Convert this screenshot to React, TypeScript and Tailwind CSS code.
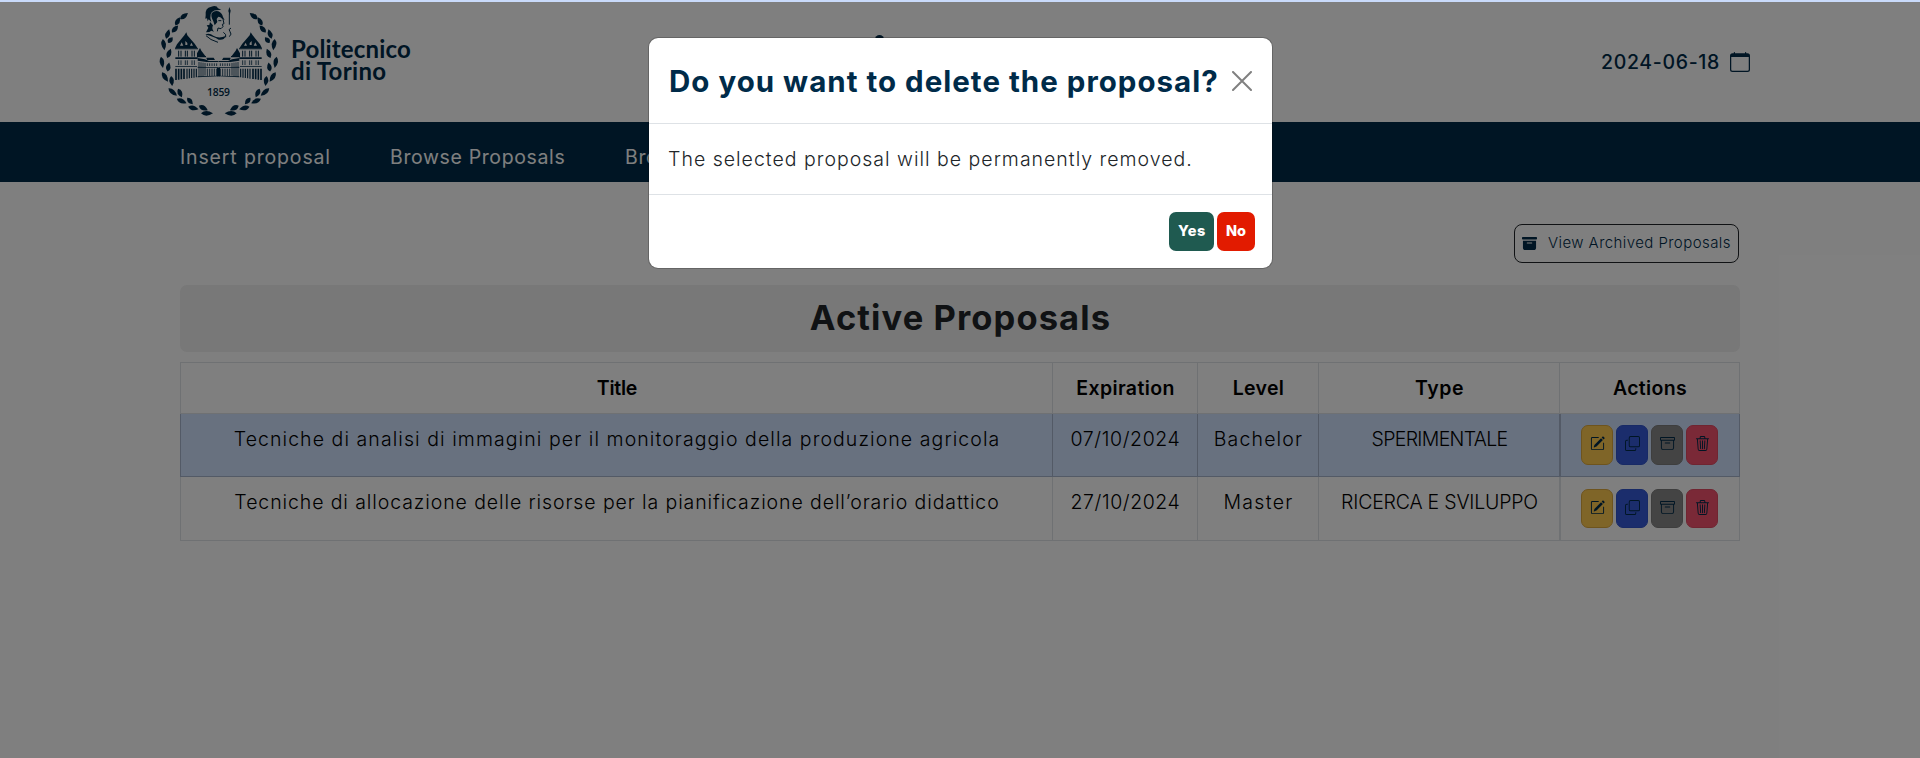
import type { ReactNode } from 'react';
import { BsArchive, BsArchiveFill, BsCalendar, BsCopy, BsPencilSquare, BsTrash3 } from 'react-icons/bs';

// Laurel leaves of the left branch: x, y, rotation, length
const leaves: [number, number, number, number][] = [
  [102, 48, -38, 15], [83, 64, -62, 14], [75, 87, -48, 14], [53, 102, -72, 15], [61, 120, -50, 11],
  [41, 134, 82, 17], [57, 160, -68, 15], [36, 187, 80, 17], [55, 201, -80, 14], [45, 231, 58, 17],
  [65, 243, 84, 15], [68, 276, 42, 17], [90, 279, 66, 14], [95, 303, 24, 16], [120, 303, 50, 13],
  [130, 324, 14, 16], [160, 324, 28, 15], [171, 340, 0, 18],
];

function Branch() {
  return (
    <g>
      {leaves.map(([x, y, r, l], i) => (
        <path
          key={i}
          transform={`translate(${x} ${y}) rotate(${r})`}
          d={`M${-l} 0 Q${-l * 0.2} -14 ${l} 0 Q${-l * 0.2} 14 ${-l} 0Z`}
        />
      ))}
    </g>
  );
}

// Left half of the castle facade
function Wing() {
  return (
    <g>
      <path d="M109 97 l3 9 22 25 9 14 H75 l6 -12 22 -27Z" />
      <path d="M90 137 l5 -10 5 10Z M106 135v-12l6 6v6Z M120 137 l4 -9 5 9Z" fill="#fff" />
      <path d="M75 145 H144 v3 H75Z M76 172 H143 v5 H76Z M76 198 H141 v2 H76Z" />
      <path d="M86 152v18M93 152v18M106 152v18M112 152v18M126 152v18M133 152v18" strokeWidth="3" stroke="currentColor" />
      <path d="M86 181v14M93 181v14M106 181v14M112 181v14M126 181v14M133 181v14" strokeWidth="2.4" stroke="currentColor" />
      <path d="M78 206v34M86 206v33M94 206v32M102 206v31" strokeWidth="5" stroke="currentColor" />
      <path d="M111 206v30M118 206v29M125 206v28M132 206v27M139 206v26" strokeWidth="3.4" stroke="currentColor" />
      <path d="M150 144 l4 8 12 16 h2 v4 H141 v-12Z" />
      <path d="M143 174 l22 4 12 5 h28 v3 H170 l-27 -4Z" />
      <path d="M169 173 h22 l4 7 h-24Z" />
      <path d="M143 200 l20 1 h42 v2 H143Z M143 229l62-2v2l-62 3Z" />
      <path d="M147 186v44M153 187v42M159 188v40M165 189v38" strokeWidth="2.4" stroke="currentColor" />
      <path
        d="M172 190v8M179 190v8M186 190v8M193 190v8M200 190v8M172 206v22M179 206v22M186 206v22M193 206v22M200 206v22"
        strokeWidth="2.4"
        stroke="currentColor"
      />
    </g>
  );
}

function Crest() {
  return (
    <svg className="h-[120px] w-[140px] shrink-0 text-[#002b49]" viewBox="0 6 420 360" fill="currentColor">
      <Branch />
      <g transform="translate(413 0) scale(-1 1)">
        <Branch />
      </g>
      <Wing />
      <g transform="translate(411 0) scale(-1 1)">
        <Wing />
      </g>
      <path d="M201 203h9v26h-9Z" />
      {/* helmeted head and spear */}
      <path d="M167 46 Q164 24 184 20 Q200 15 204 25 L214 29 L199 31 Q186 32 182 43 Q179 54 184 66 L176 58 L173 64 L171 55 L166 56Z" />
      <path d="M185 40 Q194 30 205 34 Q216 39 219 51 L224 61 L217 57 Q211 50 205 50 L200 57 L202 66 L194 76 L190 64 Q182 50 185 40Z" />
      <path d="M180 66 L189 76 Q184 87 192 95 L184 92 L178 96 L168 97 L175 83 L170 76 L178 75Z" />
      <path d="M219 58 L222 71 L217 73 L219 80 L213 86 L204 84 L202 94" fill="none" stroke="currentColor" strokeWidth="3" />
      <path d="M205 62h9" stroke="currentColor" strokeWidth="3" />
      <path d="M166 104 Q178 98 190 107 Q206 117 227 108 Q222 122 206 119 Q190 108 166 104Z" />
      <path d="M168 107 Q180 120 204 127 M220 97 Q230 102 227 112" fill="none" stroke="currentColor" strokeWidth="3" />
      <path d="M238 21 l4 11 -3 14 -4 -13Z" />
      <path d="M238 40 V74 M243 84 Q233 88 240 95 Q247 102 238 110" fill="none" stroke="currentColor" strokeWidth="3" />
      <text x="171" y="288" fontFamily="'Open Sans', sans-serif" fontSize="31" fontWeight="600" textLength="69">1859</text>
    </svg>
  );
}

function HeadCell({ children, last }: { children: ReactNode; last?: boolean }) {
  return (
    <div
      className={`border-t border-b border-l border-[#dee2e6] pt-[10px] pl-px text-center text-[19.5px] leading-[30px] font-semibold ${last ? 'border-r' : ''}`}
    >
      {children}
    </div>
  );
}

type Proposal = { title: ReactNode; expiration: ReactNode; level: ReactNode; type: ReactNode };

const proposals: Proposal[] = [
  {
    title: <span className="tracking-[1.07px]">Tecniche di analisi di immagini per il monitoraggio della produzione agricola</span>,
    expiration: <span className="tracking-[0.62px]">07/10/2024</span>,
    level: <span className="tracking-[1.15px]">Bachelor</span>,
    type: <span className="tracking-[-0.68px]">SPERIMENTALE</span>,
  },
  {
    title: <span className="tracking-[0.9px]">Tecniche di allocazione delle risorse per la pianificazione dell’orario didattico</span>,
    expiration: <span className="tracking-[0.57px]">27/10/2024</span>,
    level: <span className="tracking-[1.3px]">Master</span>,
    type: <span className="tracking-[-0.2px]">RICERCA E SVILUPPO</span>,
  },
];

const action = 'flex w-8 items-center justify-center rounded-[7px] border pb-[3px] text-[15px] text-[#002b49]';

function Row({ p, active }: { p: Proposal; active: boolean }) {
  const tone = active ? 'border-b border-[#a6b4cc] bg-[#d0e2ff]' : 'border-b border-[#dee2e6]';
  const text = `${tone} border-l pt-[10px] pl-px text-center text-[19.5px] leading-[30px] font-light`;
  const height = active ? 'h-[40px]' : 'h-[39px]';
  return (
    <>
      <div className={text}>{p.title}</div>
      <div className={text}>{p.expiration}</div>
      <div className={text}>{p.level}</div>
      <div className={text}>{p.type}</div>
      <div className={`${tone} flex gap-[3px] border-r border-l-2 pl-5 ${active ? 'pt-[11px]' : 'pt-3'}`}>
        <button className={`${action} ${height} border-[#dda83c] bg-[#ffca50]`}><BsPencilSquare /></button>
        <button className={`${action} ${height} border-[#3054cc] bg-[#365ad8]`}><BsCopy /></button>
        <button className={`${action} ${height} border-[#7c7c7c] bg-[#888888]`}><BsArchive /></button>
        <button className={`${action} ${height} border-[#e04a63] bg-[#f4526e]`}><BsTrash3 /></button>
      </div>
    </>
  );
}

function Modal() {
  return (
    <div className="absolute inset-0 flex items-start justify-center bg-black/50 pt-[35px]">
      <div className="ml-px w-[625px] overflow-hidden rounded-[10px] border border-black/20 bg-white bg-clip-padding">
        <div className="flex h-[86px] items-center justify-between border-b border-[#dee2e6] pr-5 pl-5">
          <h2 className="text-[29.5px] leading-[36px] font-bold tracking-[1.01px] whitespace-nowrap text-[#002b49]">
            Do you want to delete the proposal?
          </h2>
          <svg className="size-5 shrink-0" viewBox="0 0 20 20" fill="none" stroke="#808080" strokeWidth="2" strokeLinecap="round">
            <path d="M1 1 19 19M19 1 1 19" />
          </svg>
        </div>
        <p className="h-[70px] pt-5 pl-[19px] text-[19.5px] leading-[30px] font-light tracking-[1px] whitespace-nowrap text-[#212529]">
          The selected proposal will be permanently removed.
        </p>
        <div className="flex h-[74px] justify-end gap-[3px] border-t border-[#dee2e6] pt-[17px] pr-[17px] text-[14.5px] font-extrabold text-white">
          <button className="h-[39px] w-[45px] rounded-[7px] bg-[#1f5a50] pb-[2px] pl-px tracking-[0.7px]">Yes</button>
          <button className="h-[39px] w-[38px] rounded-[7px] bg-[#e21b00] pb-[2px]">No</button>
        </div>
      </div>
    </div>
  );
}

export default function App() {
  return (
    <div className="h-[758px] w-[1920px] overflow-hidden bg-white font-['Inter',sans-serif]">
      <div className="h-[2px] bg-[#c9dafa]" />
      <div className="relative h-[756px]">
        <header className="flex h-[120px] justify-between pr-[170px] pl-[150px] text-[#002b49]">
          <div className="flex">
            <Crest />
            <div className="pt-9 pl-px font-['Lato',sans-serif] text-[24px] leading-[22px] font-bold">
              <div className="tracking-[0.17px]">Politecnico</div>
              <div className="tracking-[0.32px]">di Torino</div>
            </div>
          </div>
          <div className="mt-[33px] mr-[253px] size-[9px] rounded-full bg-[#002b49]" />
          <div className="flex h-[120px] items-center gap-[10px] text-[19.5px] leading-[30px] font-medium">
            <span className="tracking-[0.655px]">2024-06-18</span>
            <BsCalendar className="size-5" />
          </div>
        </header>
        <nav className="flex h-[60px] bg-[#002b49] pt-5 pl-[180px] text-[19.5px] leading-[30px] text-white">
          <a className="w-[210px] tracking-[0.85px]">Insert proposal</a>
          <a className="w-[235px] tracking-[0.63px]">Browse Proposals</a>
          <a className="tracking-[0.63px]">Bro</a>
        </nav>
        <main className="px-[180px] pt-[42px] text-black">
          <div className="flex justify-end">
            <button className="mr-px flex h-[39px] w-[225px] items-center rounded-[8px] border border-[#212529] pl-[7px] text-[15px] font-light text-[#002b49]">
              <BsArchiveFill className="mr-[11px] text-[15px]" />
              <span className="tracking-[0.43px] whitespace-nowrap">View Archived Proposals</span>
            </button>
          </div>
          <h1 className="mt-[22px] h-[67px] rounded-[7px] bg-[#f0f0f0] pl-px text-center text-[34.5px] leading-[65px] font-bold tracking-[1.1px] text-[#212529]">
            Active Proposals
          </h1>
          <div className="mt-[10px] grid grid-cols-[872px_145px_121px_241px_181px] grid-rows-[52px_63px_64px]">
            <HeadCell><span className="tracking-[-0.25px]">Title</span></HeadCell>
            <HeadCell><span className="tracking-[0.38px]">Expiration</span></HeadCell>
            <HeadCell><span className="tracking-[0.3px]">Level</span></HeadCell>
            <HeadCell><span className="tracking-[0.57px]">Type</span></HeadCell>
            <HeadCell last><span className="tracking-[0.33px]">Actions</span></HeadCell>
            {proposals.map((p, i) => (
              <Row key={i} p={p} active={i === 0} />
            ))}
          </div>
        </main>
        <Modal />
      </div>
    </div>
  );
}
